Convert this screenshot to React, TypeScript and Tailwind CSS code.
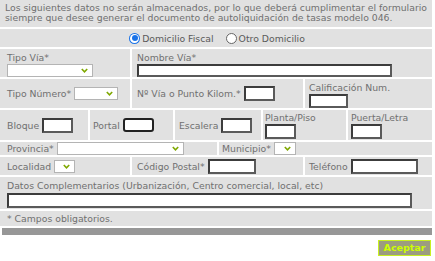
import React, { useState } from "react";

const cell = "bg-[#e1e1e1] text-[#707070]";
const inp = "bg-white border-2 border-t-[#3c3c3c] border-l-[#3c3c3c] border-r-[#5a5a5a] border-b-[#5a5a5a] h-[15px]";

function Sel({ w }: { w: number }) {
  return (
    <div
      className="bg-white border border-[#b4b4b4] h-[13px] flex items-center justify-end pr-[4px]"
      style={{ width: w }}
    >
      <svg width="7" height="5" viewBox="0 0 7 5">
        <path d="M0.8 1 L3.5 3.8 L6.2 1" fill="none" stroke="#7fa800" strokeWidth="1.6" />
      </svg>
    </div>
  );
}

function Radio({ on }: { on: boolean }) {
  return on ? (
    <span className="w-[11px] h-[11px] rounded-full bg-[#1a73e8] flex items-center justify-center">
      <span className="w-[9px] h-[9px] rounded-full bg-white flex items-center justify-center">
        <span className="w-[6px] h-[6px] rounded-full bg-[#1a73e8]" />
      </span>
    </span>
  ) : (
    <span className="w-[11px] h-[11px] rounded-full border border-[#666] bg-white" />
  );
}

export default function App() {
  const [fiscal, setFiscal] = useState(true);

  return (
    <div
      className="w-[435px] h-[261px] bg-white text-[9.3px] leading-[11px]"
      style={{ fontFamily: "'DejaVu Sans', Verdana, sans-serif" }}
    >
      <div className="w-[432px] flex flex-col gap-[2px]">
        <div className={`${cell} h-[27px] px-[5px] pt-[3px] leading-[10px]`}>
          Los siguientes datos no serán almacenados, por lo que deberá cumplimentar el formulario siempre que desee generar el documento de autoliquidación de tasas modelo 046.
        </div>

        <div className={`${cell} h-[18px] flex items-center justify-center gap-[12px] pl-[2px]`}>
          <button onClick={() => setFiscal(true)} className="flex items-center gap-[2px]">
            <Radio on={fiscal} />
            <span className="text-[#5a5a5a]">Domicilio Fiscal</span>
          </button>
          <button onClick={() => setFiscal(false)} className="flex items-center gap-[2px]">
            <Radio on={!fiscal} />
            <span className="text-[#5a5a5a]">Otro Domicilio</span>
          </button>
        </div>

        <div className="flex gap-[2px] h-[28px]">
          <div className={`${cell} w-[130px] pl-[7px] pt-[3px] flex flex-col gap-[1px]`}>
            <span>Tipo Vía*</span>
            <Sel w={86} />
          </div>
          <div className={`${cell} flex-1 pl-[5px] pt-[3px] flex flex-col gap-[1px]`}>
            <span>Nombre Vía*</span>
            <div className={`${inp} w-[255px]`} />
          </div>
        </div>

        <div className="flex gap-[2px] h-[29px]">
          <div className={`${cell} w-[130px] pl-[7px] flex items-center gap-[3px]`}>
            <span>Tipo Número*</span>
            <Sel w={44} />
          </div>
          <div className={`${cell} w-[171px] pl-[5px] flex items-center gap-[3px]`}>
            <span>Nº Vía o Punto Kilom.*</span>
            <div className={`${inp} w-[31px]`} />
          </div>
          <div className={`${cell} flex-1 pl-[4px] pt-[3px] flex flex-col gap-[1px]`}>
            <span>Calificación Num.</span>
            <div className={`${inp} w-[39px]`} />
          </div>
        </div>

        <div className="flex gap-[2px] h-[30px]">
          <div className={`${cell} w-[88px] pl-[7px] flex items-center gap-[3px]`}>
            <span>Bloque</span>
            <div className={`${inp} w-[31px] h-[14px]`} />
          </div>
          <div className={`${cell} w-[83px] pl-[3px] flex items-center gap-[3px]`}>
            <span>Portal</span>
            <div className="bg-white border-2 border-[#222] rounded-[3px] w-[31px] h-[14px]" />
          </div>
          <div className={`${cell} w-[86px] pl-[4px] flex items-center gap-[3px]`}>
            <span>Escalera</span>
            <div className={`${inp} w-[31px] h-[14px]`} />
          </div>
          <div className={`${cell} w-[83px] pl-[2px] pt-[2px] flex flex-col gap-[1px]`}>
            <span>Planta/Piso</span>
            <div className={`${inp} w-[31px]`} />
          </div>
          <div className={`${cell} flex-1 pl-[3px] pt-[2px] flex flex-col gap-[1px]`}>
            <span>Puerta/Letra</span>
            <div className={`${inp} w-[31px]`} />
          </div>
        </div>

        <div className="flex gap-[2px] h-[13px]">
          <div className={`${cell} w-[217px] pl-[7px] flex items-center gap-[3px]`}>
            <span>Provincia*</span>
            <Sel w={127} />
          </div>
          <div className={`${cell} flex-1 pl-[3px] flex items-center gap-[3px]`}>
            <span>Municipio*</span>
            <Sel w={22} />
          </div>
        </div>

        <div className="flex gap-[2px] h-[18px]">
          <div className={`${cell} w-[130px] pl-[7px] flex items-center gap-[3px]`}>
            <span>Localidad</span>
            <Sel w={21} />
          </div>
          <div className={`${cell} w-[171px] pl-[5px] flex items-center gap-[3px]`}>
            <span>Código Postal*</span>
            <div className={`${inp} w-[48px] h-[13px]`} />
          </div>
          <div className={`${cell} flex-1 pl-[4px] flex items-center gap-[3px]`}>
            <span>Teléfono</span>
            <div className={`${inp} w-[67px] h-[15px]`} />
          </div>
        </div>

        <div className={`${cell} h-[32px] pl-[7px] pt-[3px] flex flex-col gap-[2px]`}>
          <span>Datos Complementarios (Urbanización, Centro comercial, local, etc)</span>
          <div className={`${inp} w-[405px]`} />
        </div>

        <div className={`${cell} h-[15px] pl-[7px] flex items-center`}>* Campos obligatorios.</div>

        <div className="h-[7px] bg-[#979797] ml-[2px]" />
      </div>

      <div className="w-[431px] flex justify-end pt-[5px]">
        <button className="h-[16px] w-[53px] bg-[#9c9c80] border border-[#c8f020] text-[#ccff00] font-bold text-[9.5px] leading-[14px]">
          Aceptar
        </button>
      </div>
    </div>
  );
}
